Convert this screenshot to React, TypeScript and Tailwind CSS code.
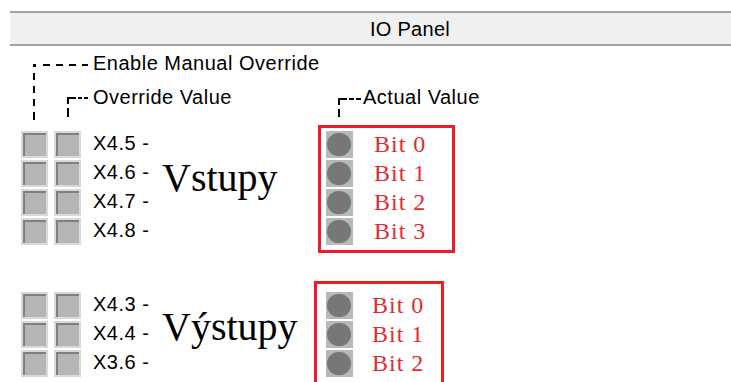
import React from "react";

const sans = "font-['Liberation_Sans',Arial,sans-serif]";
const serif = "font-['Liberation_Serif','Times_New_Roman',serif]";

function Box() {
  return (
    <div className="w-[27px] h-[27px] shrink-0 bg-[#b5b5b5] border-2 border-[#d9d9d9] shadow-[inset_2px_2px_0_#7f7f7f]" />
  );
}

function Led() {
  return (
    <div className="relative w-[27px] h-[27px] shrink-0 bg-[#b8b8b8]">
      <div className="absolute left-[1px] top-[2px] w-[24px] h-[23px] rounded-full bg-[#777777]" />
    </div>
  );
}

function InputRow({ label }: { label: string }) {
  return (
    <div className="flex items-center h-[27px]">
      <div className="flex gap-[6px]">
        <Box />
        <Box />
      </div>
      <div className="ml-[12px] w-[69px] text-[20px] leading-[25px] tracking-[0.5px] pb-[2px] text-black">
        {label}
      </div>
    </div>
  );
}

function BitRow({ label, gap }: { label: string; gap: string }) {
  return (
    <div className="flex items-center h-[27px]">
      <Led />
      <div
        className={`${serif} ${gap} text-[24px] leading-[27px] tracking-[1px] text-[#e42a30]`}
      >
        {label}
      </div>
    </div>
  );
}

export default function App() {
  const inputs = ["X4.5 -", "X4.6 -", "X4.7 -", "X4.8 -"];
  const outputs = ["X4.3 -", "X4.4 -", "X3.6 -"];
  return (
    <div className={`relative w-[731px] h-[382px] overflow-hidden bg-white text-black ${sans}`}>
      {/* header */}
      <div className="ml-[10px] mt-[11px] w-[800px] h-[35px] border-y-2 border-[#a3a3a3] bg-[#f0f0f0] flex items-center justify-center text-[20px] tracking-[0.3px] leading-[20px]">
        IO Panel
      </div>

      {/* legend */}
      <div className="pl-[93px] mt-[7px] text-[20px] leading-[20px] tracking-[0.5px]">
        Enable Manual Override
      </div>
      <div className="flex pl-[93px] mt-[14px] text-[20px] leading-[20px] tracking-[0.5px]">
        <div className="w-[270px]">Override Value</div>
        <div>Actual Value</div>
      </div>

      {/* group 1 */}
      <div className="mt-[18px] flex items-start">
        <div className="flex w-[318px] pl-[21px] pt-[6px]">
          <div className="flex flex-col gap-[2px]">
            {inputs.map((l) => (
              <InputRow key={l} label={l} />
            ))}
          </div>
          <div className={`${serif} mt-[27px] text-[40px] leading-[40px]`}>Vstupy</div>
        </div>
        <div className="w-[137px] h-[128px] border-[3px] border-[#ec1c24] pl-[5px] pt-[3px] flex flex-col gap-[2px]">
          {["Bit 0", "Bit 1", "Bit 2", "Bit 3"].map((b) => (
            <BitRow key={b} label={b} gap="ml-[21px]" />
          ))}
        </div>
      </div>

      {/* group 2 */}
      <div className="mt-[28px] flex items-start">
        <div className="flex w-[314px] pl-[21px] pt-[11px]">
          <div className="flex flex-col gap-[2px]">
            {outputs.map((l) => (
              <InputRow key={l} label={l} />
            ))}
          </div>
          <div className={`${serif} mt-[15px] text-[40px] leading-[40px]`}>Výstupy</div>
        </div>
        <div className="w-[130px] h-[128px] border-[3px] border-[#ec1c24] pl-[9px] pt-[8px] flex flex-col gap-[2px]">
          {["Bit 0", "Bit 1", "Bit 2"].map((b) => (
            <BitRow key={b} label={b} gap="ml-[19px]" />
          ))}
        </div>
      </div>

      {/* connector lines (drawing) */}
      <svg className="absolute inset-0 pointer-events-none" width="731" height="382">
        <g fill="#000">
          {/* Enable Manual Override */}
          <rect x="33" y="64" width="3" height="3" />
          <rect x="43" y="64" width="7" height="2" />
          <rect x="56" y="64" width="7" height="2" />
          <rect x="69" y="64" width="7" height="2" />
          <rect x="82" y="64" width="6" height="2" />
          <rect x="33" y="73" width="2" height="7" />
          <rect x="33" y="86" width="2" height="7" />
          <rect x="33" y="99" width="2" height="7" />
          <rect x="33" y="112" width="2" height="8" />
          {/* Override Value */}
          <rect x="67" y="97" width="9" height="2" />
          <rect x="78" y="97" width="4" height="2" />
          <rect x="84" y="97" width="4" height="2" />
          <rect x="67" y="97" width="2" height="7" />
          <rect x="67" y="108" width="2" height="9" />
          {/* Actual Value */}
          <rect x="338" y="98" width="9" height="2" />
          <rect x="349" y="98" width="5" height="2" />
          <rect x="356" y="98" width="5" height="2" />
          <rect x="338" y="98" width="2" height="7" />
          <rect x="338" y="109" width="2" height="8" />
        </g>
      </svg>
    </div>
  );
}
